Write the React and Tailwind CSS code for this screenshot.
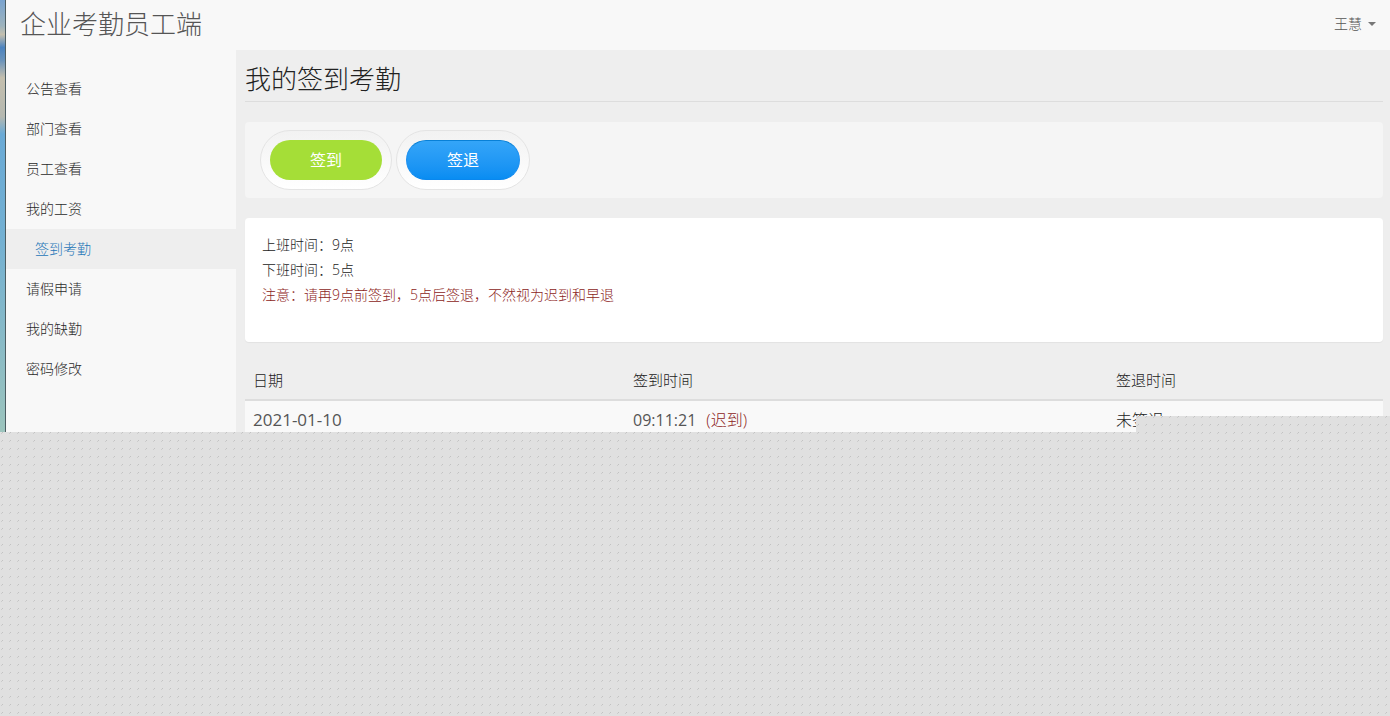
const menu = [
  { label: '公告查看', href: '#notice' },
  { label: '部门查看', href: '#department' },
  { label: '员工查看', href: '#staff' },
  { label: '我的工资', href: '#salary' },
  { label: '签到考勤', href: '#attendance', active: true },
  { label: '请假申请', href: '#leave' },
  { label: '我的缺勤', href: '#absence' },
  { label: '密码修改', href: '#password' },
];

const records = [
  { date: '2021-01-10', signIn: '09:11:21', note: '(迟到)', signOut: '未签退' },
];

// 8px grid of small diagonal dots
const dots =
  '[background:conic-gradient(from_270deg_at_1px_1px,#c2c2c2_90deg,transparent_0)_2px_0/8px_8px,conic-gradient(from_270deg_at_1px_1px,#cccccc_90deg,transparent_0)_1px_1px/8px_8px,#e0e0e0]';

function Navbar() {
  return (
    <header className="flex h-[50px] items-center justify-between bg-[#f8f8f8] px-[14px] text-[#555]">
      <a href="#home" className="pb-[2px] text-[26px] leading-[48px]">
        企业考勤员工端
      </a>
      <button type="button" className="flex items-center gap-[6px] pb-[2px] text-sm">
        王慧
        <span className="border-x-4 border-t-4 border-x-transparent border-t-[#777]" />
      </button>
    </header>
  );
}

function Sidebar() {
  return (
    <nav className="w-[230px] shrink-0 bg-[#f8f8f8] pt-[19px]">
      <ul>
        {menu.map((item) => (
          <li key={item.href}>
            <a
              href={item.href}
              className={
                item.active
                  ? 'block bg-[#eee] pl-[29px] text-sm leading-10 text-[#1f76b8]'
                  : 'block pl-5 text-sm leading-10 text-[#2a2a2a]'
              }
            >
              {item.label}
            </a>
          </li>
        ))}
      </ul>
    </nav>
  );
}

function SignButtons() {
  return (
    <div className="mt-5 flex gap-1 rounded bg-[#f5f5f5] px-[15px] py-2">
      <div className="rounded-full border border-[#e4e4e4] bg-linear-to-b from-[#f2f2f2] to-white p-[9px]">
        <button
          type="button"
          className="block h-10 w-28 rounded-full bg-[#a5de37] text-base font-normal text-white"
        >
          签到
        </button>
      </div>
      <div className="rounded-full border border-[#e4e4e4] bg-linear-to-b from-[#f2f2f2] to-white p-[9px]">
        <button
          type="button"
          className="block h-10 w-[114px] rounded-full border border-x-[#1b8ff0] border-t-[#0880d7] border-b-[#0a87ee] bg-linear-to-b from-[#34a5f8] to-[#088df2] text-base font-normal text-white"
        >
          签退
        </button>
      </div>
    </div>
  );
}

function RecordTable() {
  return (
    <table className="mt-[18px] w-full table-fixed text-left text-[#222]">
      <colgroup>
        <col className="w-[380px]" />
        <col className="w-[483px]" />
        <col />
      </colgroup>
      <thead>
        <tr className="border-b-2 border-[#ddd] text-[15px] leading-6">
          <th className="px-2 pt-2 pb-[7px] font-light">日期</th>
          <th className="px-2 pt-2 pb-[7px] font-light">签到时间</th>
          <th className="px-2 pt-2 pb-[7px] font-light">签退时间</th>
        </tr>
      </thead>
      <tbody>
        {records.map((record) => (
          <tr key={record.date} className="bg-[#f9f9f9] text-base leading-6">
            <td className="px-2 pt-[7px] text-[17px] font-normal text-[#555]">{record.date}</td>
            <td className="px-2 pt-[7px]">
              <span className="font-normal text-[#555]">{record.signIn}</span>
              <span className="ml-[10px] text-[#8c2422]">{record.note}</span>
            </td>
            <td className="px-2 pt-[7px]">{record.signOut}</td>
          </tr>
        ))}
      </tbody>
    </table>
  );
}

export default function App() {
  return (
    <div className="flex min-h-screen flex-col bg-[#eee] font-['Open_Sans','Noto_Sans_CJK_SC',sans-serif] font-light">
      <div className="relative flex">
        <div className="w-[6px] shrink-0 border-r border-[#4c5d62] bg-[linear-gradient(#7aa3cf_0,#9db3bd_6%,#c4bfae_8%,#4c83bf_11%,#6a93bb_14%,#c4bfae_18%,#b5b8b0_27%,#6aaad6_31%,#73b0d2_55%,#9cc4bd_100%)]" />
        <div className="min-w-0 flex-1">
          <Navbar />
          <div className="flex">
            <Sidebar />
            <main className="min-w-0 flex-1 pl-[9px] pr-[7px]">
              <h1 className="border-b border-[#ddd] pt-[9px] pb-[2px] text-[26px] leading-10 text-[#222]">
                我的签到考勤
              </h1>
              <SignButtons />
              <section className="mt-5 rounded bg-white px-[17px] pt-[14px] pb-[35px] text-sm leading-[25px] text-[#222] shadow-[0_1px_1px_rgba(0,0,0,0.05)]">
                <p>上班时间：9点</p>
                <p>下班时间：5点</p>
                <p className="text-[#8c2422]">注意：请再9点前签到，5点后签退，不然视为迟到和早退</p>
              </section>
              <RecordTable />
            </main>
          </div>
        </div>
        <div className={`absolute right-0 bottom-0 h-4 w-[254px] ${dots}`} />
      </div>
      <div className={`flex-1 ${dots}`} />
    </div>
  );
}
